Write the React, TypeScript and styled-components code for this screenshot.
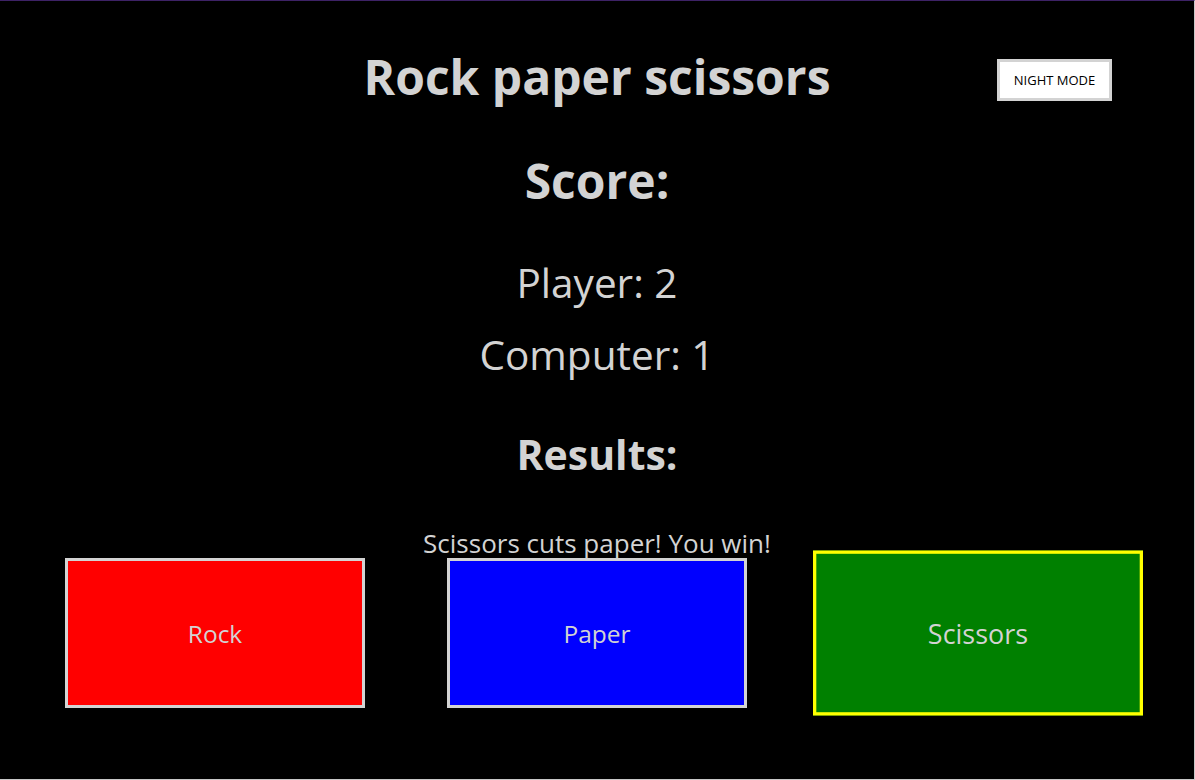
import React from "react";
import styled, { createGlobalStyle } from "styled-components";

const GlobalStyle = createGlobalStyle`
  html, body { margin: 0; padding: 0; background: #000; }
  * { box-sizing: border-box; }
`;

const Frame = styled.div`
  width: 1195px;
  height: 780px;
  background: #000;
  border-top: 1px solid #3d2266;
  border-right: 1px solid #c8c8c8;
  border-bottom: 1px solid #c8c8c8;
  color: #d3d3d3;
  font-family: "Open Sans", "Noto Sans", sans-serif;
  display: flex;
  flex-direction: column;
  align-items: center;
  overflow: hidden;
`;

const Header = styled.header`
  width: 100%;
  display: grid;
  grid-template-columns: 1fr auto 1fr;
  align-items: start;
  margin-top: 46px;
`;

const Title = styled.h1`
  grid-column: 2;
  margin: 0;
  font-size: 48px;
  font-weight: 700;
  line-height: 60px;
`;

const NightButton = styled.button`
  grid-column: 3;
  justify-self: end;
  margin: 12px 82px 0 0;
  width: 115px;
  height: 42px;
  background: #fff;
  border: 3px solid #d3d3d3;
  color: #000;
  font-family: "Open Sans", "Noto Sans", sans-serif;
  font-size: 13px;
  padding: 0;
  cursor: pointer;
`;

const Heading = styled.h2<{ $size: number; $top: number }>`
  margin: ${(p) => p.$top}px 0 0;
  font-size: ${(p) => p.$size}px;
  font-weight: 700;
  line-height: 60px;
`;

const ScoreLine = styled.p<{ $top: number }>`
  margin: ${(p) => p.$top}px 0 0;
  font-size: 40.5px;
  line-height: 60px;
`;

const Message = styled.p`
  margin: 44px 0 0;
  font-size: 26px;
  line-height: 30px;
`;

const Choices = styled.div`
  display: flex;
  justify-content: center;
  align-items: center;
  gap: 82px;
  padding-right: 1.5px;
`;

const Choice = styled.button<{ $bg: string; $active?: boolean }>`
  width: 300px;
  height: 150px;
  background: ${(p) => p.$bg};
  border: 3px solid ${(p) => (p.$active ? "#ffff00" : "#d3d3d3")};
  color: #d3d3d3;
  font-family: "Open Sans", "Noto Sans", sans-serif;
  font-size: 24.5px;
  padding: 0;
  cursor: pointer;
  margin-left: ${(p) => (p.$active ? "-1.5px" : "0")};
  transform: ${(p) => (p.$active ? "scale(1.1)" : "none")};
`;

export default function App() {
  return (
    <>
      <GlobalStyle />
      <Frame>
        <Header>
          <Title>Rock paper scissors</Title>
          <NightButton>NIGHT MODE</NightButton>
        </Header>
        <Heading $size={48} $top={44}>Score:</Heading>
        <ScoreLine $top={42}>Player: 2</ScoreLine>
        <ScoreLine $top={12}>Computer: 1</ScoreLine>
        <Heading $size={41} $top={39}>Results:</Heading>
        <Message>Scissors cuts paper! You win!</Message>
        <Choices>
          <Choice $bg="#ff0000">Rock</Choice>
          <Choice $bg="#0000ff">Paper</Choice>
          <Choice $bg="#008000" $active>Scissors</Choice>
        </Choices>
      </Frame>
    </>
  );
}
